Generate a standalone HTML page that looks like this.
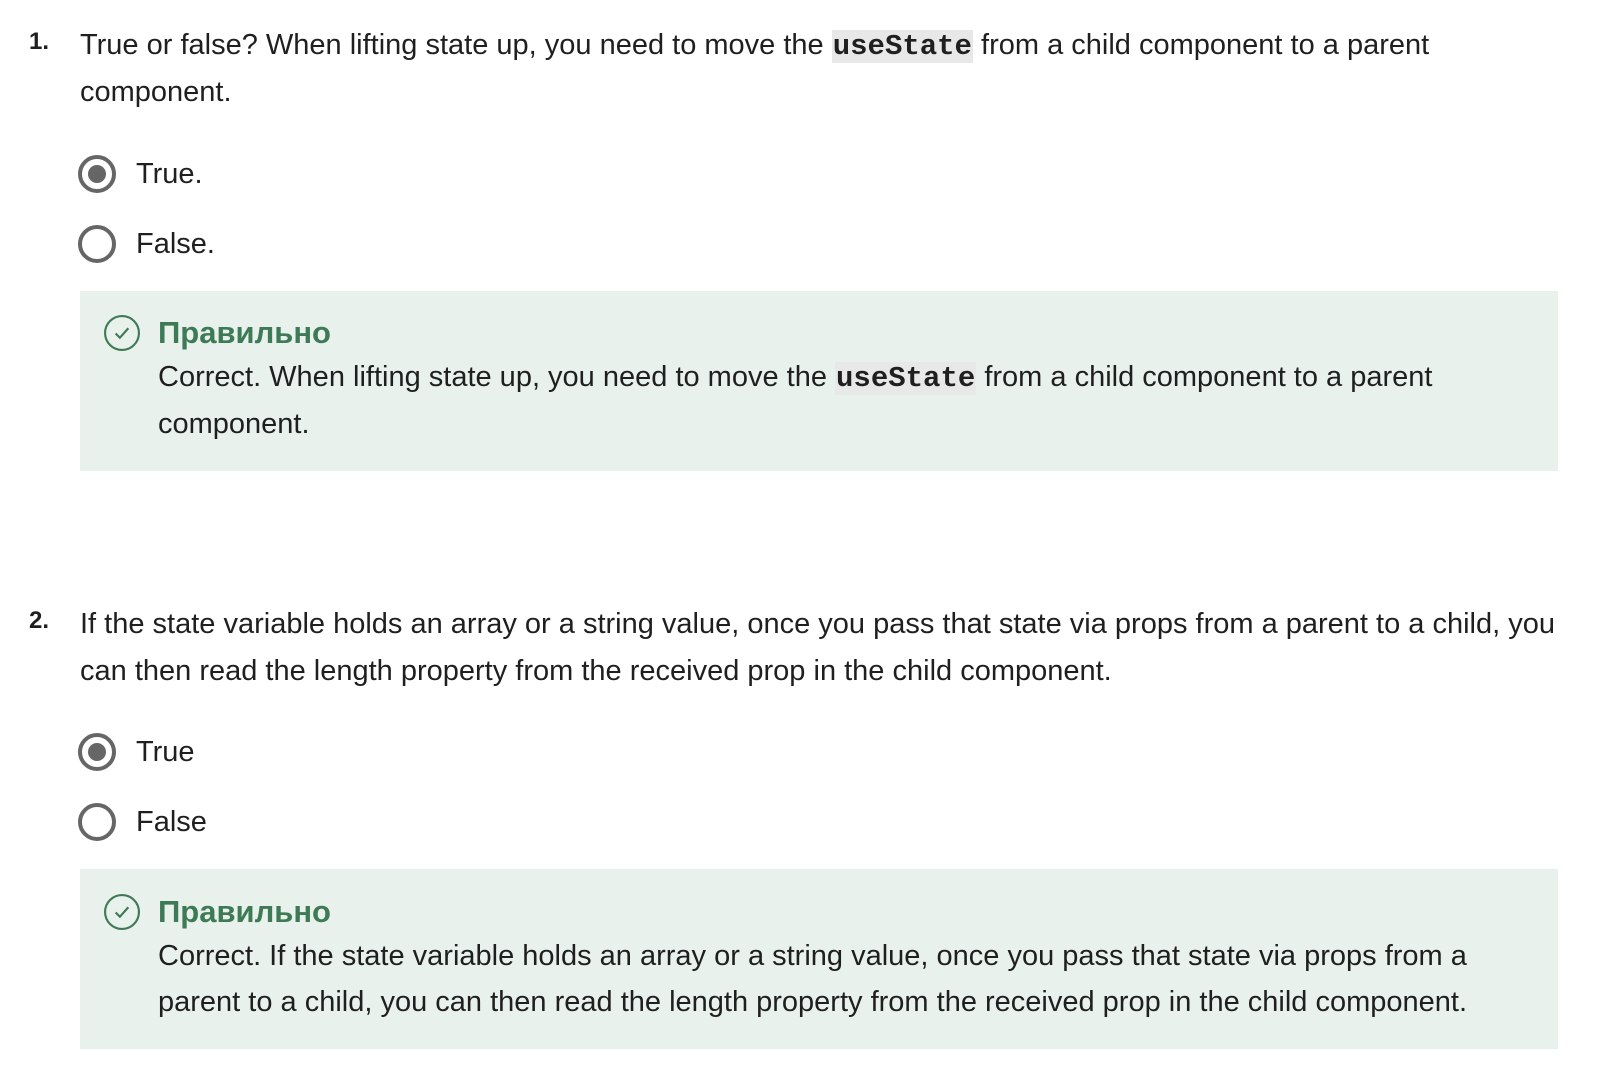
<!DOCTYPE html>
<html><head><meta charset="utf-8"><style>
body{margin:0;width:1604px;height:1074px;background:#fff;position:relative;overflow:hidden;font-family:"Liberation Sans",sans-serif;color:#1f1f1f}
.l{position:absolute;white-space:nowrap;font-size:29px;line-height:34px}
.n{position:absolute;font-weight:bold;font-size:24px;line-height:34px}
code{font-family:"Liberation Mono",monospace;font-weight:bold;background:#e8e8e8;font-size:29px;padding:0 1px}
.r{position:absolute;width:30px;height:30px;border:4px solid #666;border-radius:50%}
.r.on::after{content:"";position:absolute;left:6px;top:6px;width:18px;height:18px;border-radius:50%;background:#666}
.box{position:absolute;left:80px;width:1478px;height:180px;background:#e8f1ec}
.h{position:absolute;font-weight:bold;color:#3d7a55;font-size:31px;line-height:34px}
.ic{position:absolute;width:36px;height:36px}
</style></head><body>
<div class="n" style="left:29px;top:25px">1.</div>
<div class="l" style="left:80px;top:28px">True or false? When lifting state up, you need to move the <code>useState</code> from a child component to a parent</div>
<div class="l" style="left:80px;top:75px">component.</div>
<div class="r on" style="left:78px;top:155px"></div>
<div class="l" style="left:136px;top:157px">True.</div>
<div class="r" style="left:78px;top:225px"></div>
<div class="l" style="left:136px;top:227px">False.</div>
<div class="box" style="top:291px"></div>
<svg class="ic" style="left:104px;top:315px" viewBox="0 0 34 34"><circle cx="17" cy="17" r="16" fill="none" stroke="#3d7a55" stroke-width="2"/><path d="M11 17.5l4 4 8-9" fill="none" stroke="#3d7a55" stroke-width="2"/></svg>
<div class="h" style="left:158px;top:316px">Правильно</div>
<div class="l" style="left:158px;top:360px">Correct. When lifting state up, you need to move the <code>useState</code> from a child component to a parent</div>
<div class="l" style="left:158px;top:407px">component.</div>

<div class="n" style="left:29px;top:604px">2.</div>
<div class="l" style="left:80px;top:607px">If the state variable holds an array or a string value, once you pass that state via props from a parent to a child, you</div>
<div class="l" style="left:80px;top:654px">can then read the length property from the received prop in the child component.</div>
<div class="r on" style="left:78px;top:733px"></div>
<div class="l" style="left:136px;top:735px">True</div>
<div class="r" style="left:78px;top:803px"></div>
<div class="l" style="left:136px;top:805px">False</div>
<div class="box" style="top:869px"></div>
<svg class="ic" style="left:104px;top:894px" viewBox="0 0 34 34"><circle cx="17" cy="17" r="16" fill="none" stroke="#3d7a55" stroke-width="2"/><path d="M11 17.5l4 4 8-9" fill="none" stroke="#3d7a55" stroke-width="2"/></svg>
<div class="h" style="left:158px;top:895px">Правильно</div>
<div class="l" style="left:158px;top:939px">Correct. If the state variable holds an array or a string value, once you pass that state via props from a</div>
<div class="l" style="left:158px;top:985px">parent to a child, you can then read the length property from the received prop in the child component.</div>
</body></html>
